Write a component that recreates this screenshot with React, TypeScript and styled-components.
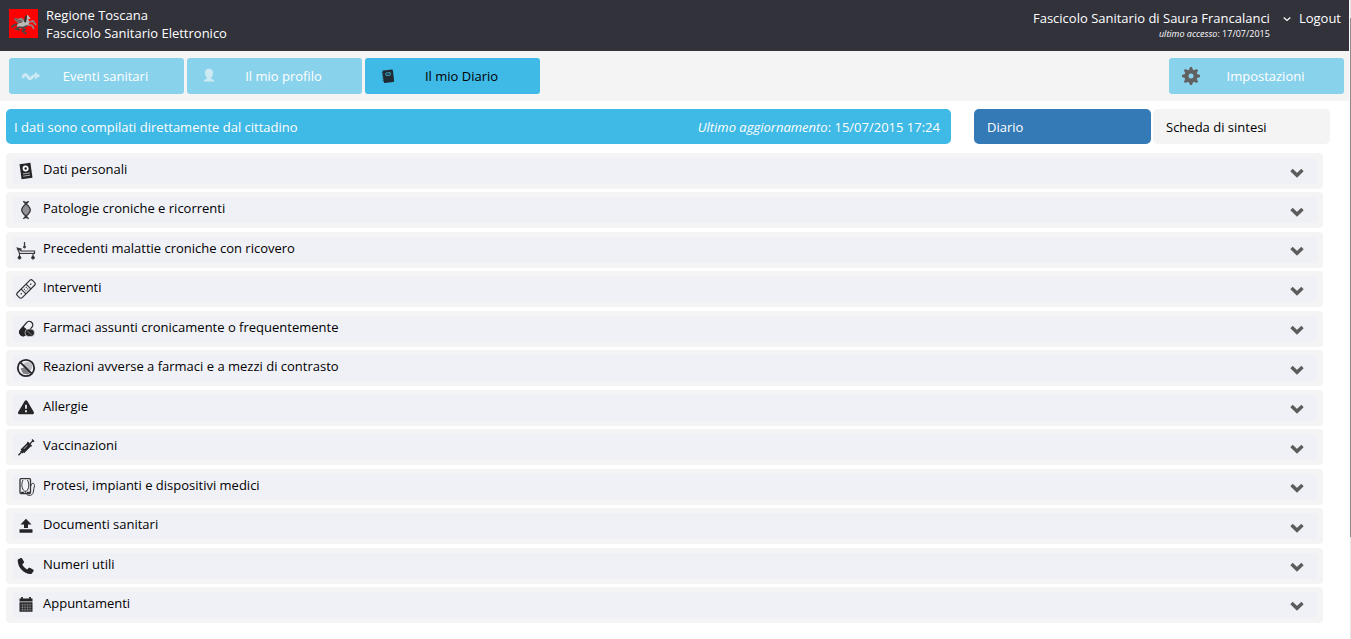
import React from "react";
import styled, { createGlobalStyle, css } from "styled-components";

const GlobalStyle = createGlobalStyle`
  *, *::before, *::after { box-sizing: border-box; }
  body {
    margin: 0;
    background: #fff;
    color: #000;
    font: 13px/18px "Open Sans", "Noto Sans", sans-serif;
  }
  button { font: inherit; color: inherit; border: 0; margin: 0; cursor: pointer; }
  a { color: inherit; text-decoration: none; }
  svg { display: block; flex: none; }
`;

const Page = styled.div`
  padding-right: 2px;
`;

const ScrollTrack = styled.div`
  position: fixed;
  top: 0;
  right: 0;
  bottom: 0;
  width: 1px;
  background: #e8e8e8;
`;

const ScrollThumb = styled.div`
  height: 84%;
  border-top: 18px solid #e8e8e8;
  background: #8c8c8c;
`;

const Header = styled.header`
  display: flex;
  justify-content: space-between;
  align-items: flex-start;
  height: 51px;
  padding: 6px 8px 0 9px;
  background: #32323b;
  color: #fff;
`;

const Brand = styled.a`
  display: flex;
  gap: 8px;

  svg { margin-top: 3px; }
`;

const BrandText = styled.span`
  display: flex;
  flex-direction: column;
`;

const Account = styled.div`
  display: flex;
  align-items: flex-start;
  padding-top: 3px;
`;

const Owner = styled.div`
  text-align: right;
`;

const LastAccess = styled.div`
  font-size: 9px;
  line-height: 14px;
`;

const MenuButton = styled.button`
  padding: 7px 8px 0 13px;
  background: none;
`;

const NavBar = styled.nav`
  display: flex;
  gap: 3px;
  padding: 7px 5px 7px 9px;
  background: #f4f4f4;
`;

const NavButton = styled.button<{ $active?: boolean; $end?: boolean }>`
  display: flex;
  align-items: center;
  width: 175px;
  height: 36px;
  padding: 0 14px 0 12px;
  border-radius: 3px;
  background: ${(p) => (p.$active ? "#3fb9e5" : "#89d2eb")};
  color: ${(p) => (p.$active ? "#000" : "#fff")};
  ${(p) => p.$end && css`margin-left: auto;`}
`;

const NavLabel = styled.span`
  flex: 1;
  text-align: center;
`;

const Main = styled.main`
  padding: 8px 19px 0 6px;
`;

const Toolbar = styled.div`
  display: flex;
  gap: 23px;
  margin-bottom: 9px;
`;

const Notice = styled.div`
  display: flex;
  flex: 1;
  justify-content: space-between;
  align-items: center;
  height: 35px;
  padding: 0 11px 0 8px;
  border-radius: 5px;
  background: #3fb9e5;
  color: #fff;
`;

const Views = styled.div`
  display: flex;
  gap: 2px;
`;

const ViewButton = styled.button<{ $active?: boolean }>`
  width: 177px;
  height: 35px;
  padding: 0 13px;
  border-radius: 5px;
  background: ${(p) => (p.$active ? "#337ab7" : "#f4f4f4")};
  color: ${(p) => (p.$active ? "#fff" : "#000")};
  text-align: left;
`;

const Sections = styled.ul`
  display: flex;
  flex-direction: column;
  justify-content: space-between;
  min-height: calc(100vh - 169px);
  margin: 0 7px 0 0;
  padding: 0;
  list-style: none;
`;

const SectionItem = styled.li`
  padding: 5px 6px 5px 7px;
  border-radius: 4px;
  background: #f4f4f4;
`;

const SectionButton = styled.button`
  display: flex;
  align-items: center;
  gap: 7px;
  width: 100%;
  height: 26px;
  padding: 0 13px 0 3px;
  border-radius: 3px;
  background: #f0f1f7;
  text-align: left;
`;

const SectionLabel = styled.span`
  flex: 1;
  padding-bottom: 4px;
`;

const ChevronSlot = styled.span`
  padding-top: 3px;
`;

const Logo = () => (
  <svg width="29" height="29" viewBox="0 0 29 29" aria-hidden="true">
    <rect width="29" height="29" fill="#fe0000" />
    <path d="M9 15.500C6 15 4 16 2.500 18.500" stroke="#4d4343" strokeWidth="1.800" fill="none" />
    <path d="M4.500 9L9 9.700L12.500 8.800L16 11.500L14 15.500L10 15L7 12.500Z" fill="#8f8a88" />
    <path d="M5 9.500L13 12.500M7 12L13 14" stroke="#5f4442" strokeWidth=".8" />
    <path d="M8.500 15L13 13.500L16 11L17 8L18.500 5.800L19.500 6.700L21.500 9.500L20 10.300L19 10L20.500 13L19.500 16.500L15 18.500L11.500 19.500L8 18Z" fill="#bdbab8" />
    <path d="M15 13L15.600 8L18 5.800L17.800 10L17 13.500Z" fill="#333" />
    <path d="M19.500 13.300L24 12L27 16M19.500 15.800L23 16.500L25 20" stroke="#8f8987" strokeWidth="1.700" fill="none" />
    <path d="M10 18L7 20L11 21M13 18.500L16 20.500L13.500 22L17.500 25" stroke="#4b4443" strokeWidth="1.800" fill="none" />
    <path d="M9.500 18L14 18.500L18.500 16.500" stroke="#4d4a49" strokeWidth="1.400" fill="none" />
  </svg>
);

const EventsIcon = () => (
  <svg width="20" height="20" viewBox="0 0 20 20" aria-hidden="true">
    <path d="M2.200 10.800C3.500 8.200 5 8 6.500 10.300S9 13.800 10.800 11.500S12.500 9.500 15 9.500" fill="none" stroke="#cdeaf4" strokeWidth="3" strokeLinecap="round" />
    <path d="M14 6L19.500 9.700L14 13.300Z" fill="#cdeaf4" />
  </svg>
);

const ProfileIcon = () => (
  <svg width="20" height="20" viewBox="0 0 20 20" aria-hidden="true">
    <path d="M10 2.800c-2.800 0-4 1.800-4 4.200 0 1.800.7 3.500 1.800 4.500v1.300c-1.300.8-3.100.8-3.100 2.700h10.600c0-1.900-1.800-1.900-3.100-2.700v-1.300c1.100-1 1.800-2.700 1.800-4.500 0-2.400-1.200-4.200-4-4.200z" fill="#cdeaf4" />
  </svg>
);

const DiaryIcon = () => (
  <svg width="20" height="20" viewBox="0 0 20 20" aria-hidden="true">
    <g transform="rotate(-7 11 10)">
      <rect x="6" y="4" width="10.500" height="12.500" rx="1" fill="#1f2a33" />
      <path d="M5.200 6h1.600M5.200 8.500h1.600M5.200 11h1.600M5.200 13.500h1.600" stroke="#2c4654" />
      <rect x="9" y="6.800" width="4.600" height="2.600" rx="1" fill="#1f2a33" stroke="#3fa0c4" />
    </g>
  </svg>
);

const GearIcon = () => (
  <svg width="20" height="20" viewBox="0 0 20 20" aria-hidden="true">
    <g fill="#616161">
      {[0, 45, 90, 135].map((angle) => (
        <path key={angle} transform={`rotate(${angle} 10 10)`} d="M8 4L9 1h2l1 3v12l-1 3H9l-1-3z" />
      ))}
      <circle cx="10" cy="10" r="6.600" />
    </g>
    <circle cx="10" cy="10" r="2.500" fill="#89d2eb" />
  </svg>
);

const CaretIcon = () => (
  <svg width="8" height="6" viewBox="0 0 8 6" aria-hidden="true">
    <path d="M.7 1.500L4 4.500L7.300 1.500" fill="none" stroke="#fff" strokeWidth="1.200" />
  </svg>
);

const ChevronIcon = () => (
  <svg width="14" height="10" viewBox="0 0 14 10" aria-hidden="true">
    <path d="M1.500 2L7 7.300L12.500 2" fill="none" stroke="#5c5c5c" strokeWidth="3.400" />
  </svg>
);

const ink = "#252527";

const glyphs: Record<string, React.ReactNode> = {
  card: (
    <g transform="rotate(-8 10 10)">
      <rect x="4.500" y="2.500" width="11" height="15" fill={ink} />
      <circle cx="10" cy="7.500" r="3" fill="#fff" />
      <circle cx="10" cy="7.500" r="1.300" fill={ink} />
      <path d="M6.500 12.500h7M6.500 14.700h7" stroke="#b5b5b8" strokeWidth=".9" />
    </g>
  ),
  dna: (
    <g fill="none" stroke="#343437" strokeWidth="1.300">
      <path d="M7.500 1C8 3.500 14.300 5.500 14.300 10S8 16.500 7.500 19M12.500 1C12 3.500 5.700 5.500 5.700 10S12 16.500 12.500 19" />
      <path d="M7.500 6h5M6 8h8M6 10h8M6 12h8M7.500 14h5" strokeWidth="1" />
      <path d="M8.300 2.500h3.400M8.300 17.500h3.400" strokeWidth="1.400" />
    </g>
  ),
  bed: (
    <g fill="none" stroke="#3c3c3f">
      <path d="M8.500 2v5" strokeWidth="1.300" />
      <circle cx="8.500" cy="7" r="1" fill="#3c3c3f" />
      <path d="M1.500 8.500L5.500 11H18.500V13.500H3.500L1.500 8.500Z" fill="#d9d9df" strokeWidth="1.200" />
      <path d="M3.500 13.500v4M17 13.500v4" strokeWidth="1.200" />
      <circle cx="3.500" cy="17.700" r="1.400" fill={ink} />
      <circle cx="17" cy="17.700" r="1.400" fill={ink} />
      <path d="M1 8.500l4.500 1" strokeWidth="2" />
    </g>
  ),
  plaster: (
    <g transform="rotate(-45 10 10)" fill="none" stroke="#343437" strokeWidth="1.200">
      <rect x="-.7" y="6.600" width="21.400" height="6.800" rx="2" />
      <path d="M6.500 6.600v6.800M13.500 6.600v6.800" />
      <path d="M8.200 9h1M10.800 9h1M8.200 11.200h1M10.800 11.200h1M2.500 10h1.500M16 10h1.500" />
    </g>
  ),
  pills: (
    <g>
      <g transform="rotate(-50 10 9)">
        <rect x="1.500" y="6" width="16.500" height="7" rx="3.500" fill="#f0f1f7" stroke={ink} strokeWidth="1.300" />
        <path d="M9.500 5.500H5a4 4 0 0 0 0 8H9.500z" fill={ink} />
      </g>
      <rect x="9" y="10" width="9.500" height="7.500" rx="3.700" fill={ink} stroke="#f0f1f7" strokeWidth=".6" />
      <path d="M11.500 12l4 4" stroke="#909094" strokeWidth=".8" />
    </g>
  ),
  forbidden: (
    <g>
      <circle cx="11.800" cy="8.500" r="4.500" fill="#bcbcc1" />
      <path d="M4.500 10.500L10 9L15 14.500L11.500 16.500L7 15.500Z" fill="#808084" />
      <circle cx="10" cy="10" r="8.200" fill="none" stroke={ink} strokeWidth="1.800" />
      <path d="M4.300 4.300l11.400 11.400" stroke={ink} strokeWidth="1.800" />
    </g>
  ),
  warning: (
    <g>
      <path d="M10 3.800L16.500 14.700H3.500Z" fill={ink} stroke={ink} strokeWidth="3" strokeLinejoin="round" />
      <path d="M10 6.800v4M10 12.300v2" stroke="#f0f1f7" strokeWidth="1.800" />
    </g>
  ),
  syringe: (
    <g transform="rotate(-45 10 10)" stroke={ink}>
      <path d="M-1.200 10.500H5" strokeWidth="1.300" />
      <path d="M3.500 9v3" strokeWidth="1.600" />
      <rect x="4.800" y="8.500" width="9" height="4" fill={ink} />
      <path d="M7 9.800h5" stroke="#9a9a9e" strokeWidth="1" />
      <path d="M14.500 7.500v6M14.500 10.500h5M19.500 9v3" strokeWidth="1.300" />
    </g>
  ),
  device: (
    <g fill="none" stroke="#343437" strokeWidth="1.300">
      <rect x="4" y="1.700" width="10.500" height="14.800" rx="1" />
      <path d="M7 3C5 7 5.700 12 8.500 14.200H10.500C13 12 13.500 7 11.500 3" strokeWidth="1" />
      <path d="M9.500 14.500c0 5 7.500 5.200 7.800.5 0-2.500 1.200-4.500 1.200-6.500 0-3-3.500-3-3 0" strokeWidth="1" />
      <path d="M5 15.500h3M11 15.500h3" />
    </g>
  ),
  upload: (
    <g fill={ink}>
      <path d="M10 2.800L15.500 8.500H12V12H8V8.500H4.500Z" />
      <rect x="3.500" y="13.200" width="13" height="3.600" rx=".5" />
    </g>
  ),
  phone: (
    <path d="M2.300 3.300L4.800 2c.5-.2 1-.1 1.300.4l1.900 3.400c.2.500.1 1-.3 1.300l-1.400 1.100c.9 2.300 2.700 4.200 5 5.200l1.200-1.400c.4-.4.9-.5 1.400-.2l3.400 2c.5.3.6.8.3 1.300l-1.700 2.300c-.3.500-.8.7-1.400.6C7.700 17.800 2 11.500 1.700 4.700c0-.6.100-1.100.6-1.400z" fill={ink} />
  ),
  calendar: (
    <g>
      <path d="M3.500 3.500h13v3h-13zM3.500 7.300h13v9.500h-13z" fill={ink} />
      <path d="M6 2v2.500M14 2v2.500" stroke={ink} strokeWidth="1.700" />
      <path d="M4.500 9.800h11M4.500 12.300h11M4.500 14.800h11M6.500 8.500v7.500M9 8.500v7.500M11.500 8.500v7.500M14 8.500v7.500" stroke="#9a9aa0" strokeWidth=".5" />
    </g>
  ),
};

const sections = [
  { glyph: "card", label: "Dati personali" },
  { glyph: "dna", label: "Patologie croniche e ricorrenti" },
  { glyph: "bed", label: "Precedenti malattie croniche con ricovero" },
  { glyph: "plaster", label: "Interventi" },
  { glyph: "pills", label: "Farmaci assunti cronicamente o frequentemente" },
  { glyph: "forbidden", label: "Reazioni avverse a farmaci e a mezzi di contrasto" },
  { glyph: "warning", label: "Allergie" },
  { glyph: "syringe", label: "Vaccinazioni" },
  { glyph: "device", label: "Protesi, impianti e dispositivi medici" },
  { glyph: "upload", label: "Documenti sanitari" },
  { glyph: "phone", label: "Numeri utili" },
  { glyph: "calendar", label: "Appuntamenti" },
];

export default function App() {
  return (
    <Page>
      <GlobalStyle />
      <Header>
        <Brand href="#">
          <Logo />
          <BrandText>
            <span>Regione Toscana</span>
            <span>Fascicolo Sanitario Elettronico</span>
          </BrandText>
        </Brand>
        <Account>
          <Owner>
            <div>Fascicolo Sanitario di Saura Francalanci</div>
            <LastAccess>
              <em>ultimo accesso</em>: 17/07/2015
            </LastAccess>
          </Owner>
          <MenuButton aria-label="Menu utente">
            <CaretIcon />
          </MenuButton>
          <a href="#">Logout</a>
        </Account>
      </Header>
      <NavBar>
        <NavButton><EventsIcon /><NavLabel>Eventi sanitari</NavLabel></NavButton>
        <NavButton><ProfileIcon /><NavLabel>Il mio profilo</NavLabel></NavButton>
        <NavButton $active><DiaryIcon /><NavLabel>Il mio Diario</NavLabel></NavButton>
        <NavButton $end><GearIcon /><NavLabel>Impostazioni</NavLabel></NavButton>
      </NavBar>
      <Main>
        <Toolbar>
          <Notice>
            <span>I dati sono compilati direttamente dal cittadino</span>
            <span><em>Ultimo aggiornamento</em>: 15/07/2015 17:24</span>
          </Notice>
          <Views>
            <ViewButton $active>Diario</ViewButton>
            <ViewButton>Scheda di sintesi</ViewButton>
          </Views>
        </Toolbar>
        <Sections>
          {sections.map(({ glyph, label }) => (
            <SectionItem key={label}>
              <SectionButton aria-expanded="false">
                <svg width="20" height="20" viewBox="0 0 20 20" aria-hidden="true">
                  {glyphs[glyph]}
                </svg>
                <SectionLabel>{label}</SectionLabel>
                <ChevronSlot><ChevronIcon /></ChevronSlot>
              </SectionButton>
            </SectionItem>
          ))}
        </Sections>
      </Main>
      <ScrollTrack><ScrollThumb /></ScrollTrack>
    </Page>
  );
}
